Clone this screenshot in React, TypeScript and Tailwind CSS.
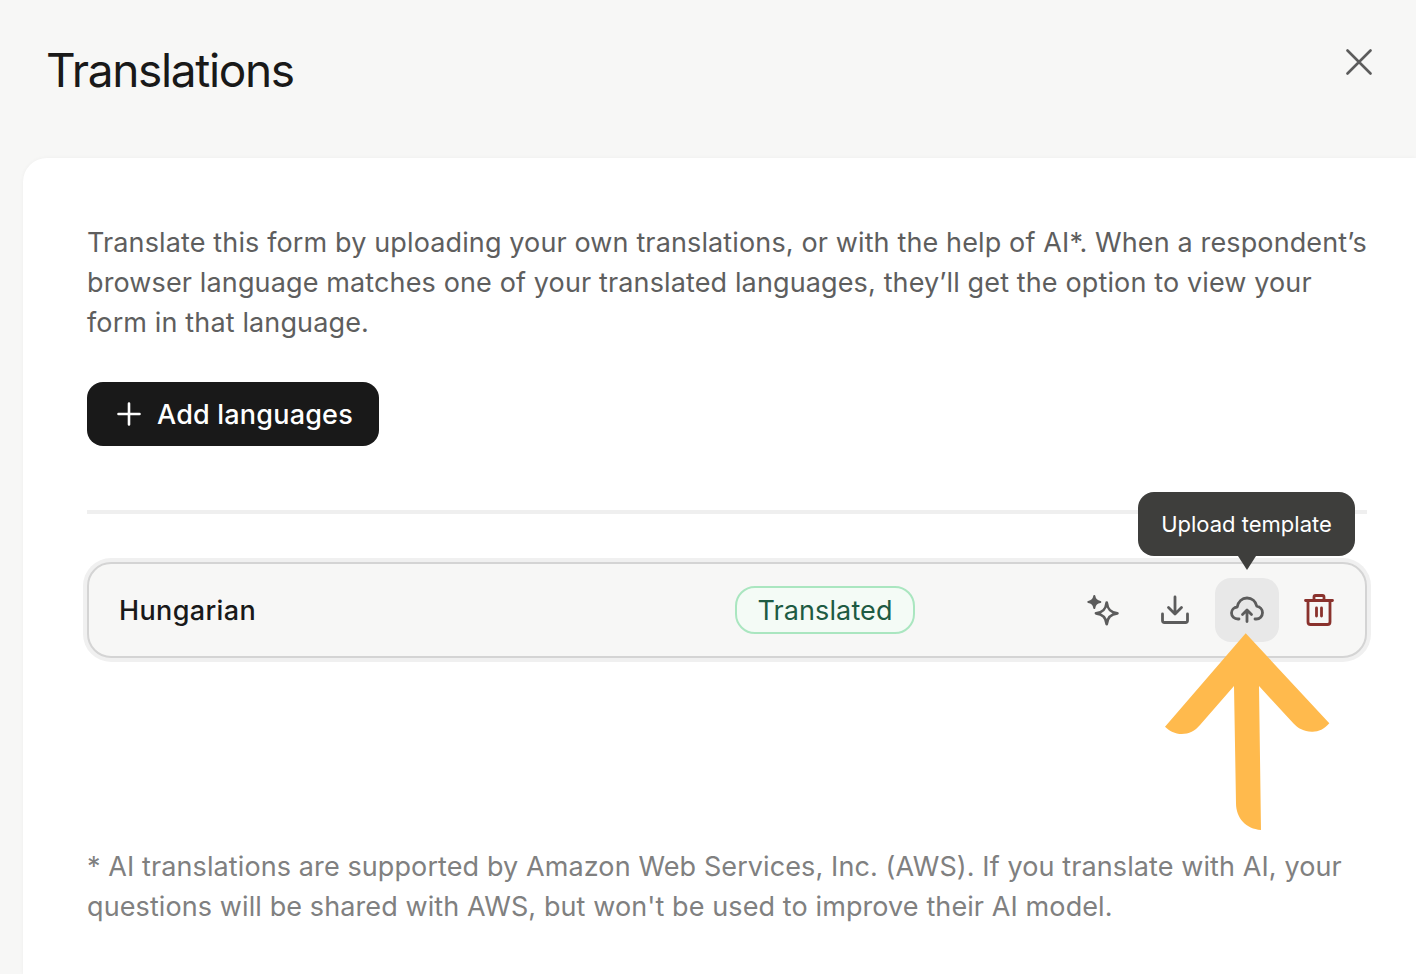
export default function App() {
  return (
    <div className="relative h-[974px] w-[1416px] overflow-hidden bg-[#f7f7f6] font-['Inter',sans-serif] [font-variation-settings:'opsz'_14]">
      <header className="flex h-[158px] items-start justify-between pl-[46px] pr-[44px]">
        <h1 className="mt-[40px] text-[46px] leading-[60px] font-normal tracking-[-1.35px] text-[#191919] [font-variation-settings:normal]">Translations</h1>
        <button className="mt-[49px]" aria-label="Close">
          <svg width="26" height="26" viewBox="0 0 26 26" fill="none" stroke="#5c5c5c" strokeWidth="2.6" strokeLinecap="round" className="block">
            <path d="M1.5 1.5L24.5 24.5M24.5 1.5L1.5 24.5" />
          </svg>
        </button>
      </header>
      <main className="ml-[23px] h-[816px] rounded-tl-[24px] bg-white pl-[64px] pr-[49px] pt-[65px] shadow-[0_0_4px_rgba(0,0,0,0.04)]">
        <p className="text-[27px] leading-[40px] tracking-[0.13px] text-[#5e5e5e]">
          Translate this form by uploading your own translations, or with the help of AI*. When a respondent’s browser language matches one of your translated languages, they’ll get the option to view your form in that language.
        </p>
        <button className="mt-[39px] flex h-[64px] w-[292px] items-center rounded-[16px] bg-[#191919] pl-[30px] text-[27px] font-[450] tracking-[0.2px] text-white">
          <svg width="24" height="24" viewBox="0 0 24 24" fill="none" stroke="white" strokeWidth="2.6" strokeLinecap="round" className="block">
            <path d="M12 1.5V22.5M1.5 12H22.5" />
          </svg>
          <span className="ml-[16px] pt-[2px]">Add languages</span>
        </button>
        <div className="mt-[64px] h-[4px] bg-[#efefef]" />
        <div className="relative mt-[48px] flex h-[96px] items-center rounded-[24px] border-2 border-[#d4d4d4] bg-[#f7f7f6] pl-[30px] pr-[14px] shadow-[0_0_0_4px_#f0f0f0]">
          <span className="w-[616px] pt-[2px] text-[27px] font-[450] tracking-[0.36px] text-[#191919]">Hungarian</span>
          <span className="flex h-[48px] w-[180px] items-center justify-center rounded-[20px] border-2 border-[#aae6c0] bg-[#f4fbf6] pt-[2px] text-[27px] tracking-[0.12px] text-[#1e5b43]">Translated</span>
          <div className="ml-auto flex items-center gap-[8px]">
            <button className="flex h-[64px] w-[64px] items-center justify-center" aria-label="Translate with AI">
              <svg width="36" height="36" viewBox="0 0 36 36" fill="none" className="block">
                <path d="M21.7 10.6C22.6 17.5 25.5 20.4 32.4 21.3C25.5 22.2 22.6 25.1 21.7 32C20.8 25.1 17.9 22.2 11 21.3C17.9 20.4 20.8 17.5 21.7 10.6Z" stroke="#5c5c5c" strokeWidth="2.8" strokeLinejoin="round" />
                <path d="M9.3 4C9.8 7.5 11.5 9.5 15.3 10C11.5 10.5 9.8 12.5 9.3 16C8.8 12.5 7.1 10.5 3.3 10C7.1 9.5 8.8 7.5 9.3 4Z" fill="#5c5c5c" stroke="#5c5c5c" strokeWidth="2" strokeLinejoin="round" />
              </svg>
            </button>
            <button className="flex h-[64px] w-[64px] items-center justify-center" aria-label="Download template">
              <svg width="32" height="32" viewBox="0 0 32 32" fill="none" stroke="#5c5c5c" strokeWidth="2.8" strokeLinecap="round" strokeLinejoin="round" className="block">
                <path d="M16 3V20M9.5 13.5L16 20L22.5 13.5" />
                <path d="M3.5 20V26.5C3.5 27.6 4.4 28.5 5.5 28.5H26.5C27.6 28.5 28.5 27.6 28.5 26.5V20" />
              </svg>
            </button>
            <button className="flex h-[64px] w-[64px] items-center justify-center rounded-[16px] bg-[#e8e8e8]" aria-label="Upload template">
              <svg width="34" height="28" viewBox="0 0 34 28" fill="none" stroke="#5c5c5c" strokeWidth="2.8" strokeLinecap="round" strokeLinejoin="round" className="block">
                <path d="M9 23H8C4.2 23 1.5 20.3 1.5 17C1.5 13.8 4 11.2 7.2 11C8.2 5.6 12 2 17 2C22 2 25.8 5.6 26.8 10.2C30 10.8 32.5 13.6 32.5 16.8C32.5 20.2 29.8 23 26.3 23H25" />
                <path d="M17 25.5V14.5M12.5 18.5L17 14L21.5 18.5" />
              </svg>
            </button>
            <button className="flex h-[64px] w-[64px] items-center justify-center" aria-label="Delete">
              <svg width="30" height="32" viewBox="0 0 30 32" fill="none" stroke="#8a322d" strokeWidth="2.8" strokeLinecap="round" strokeLinejoin="round" className="block">
                <path d="M1.5 6.5H28.5M10 6.5V3C10 2.2 10.7 1.5 11.5 1.5H18.5C19.3 1.5 20 2.2 20 3V6.5" />
                <path d="M4 6.5V28C4 29.4 5.1 30.5 6.5 30.5H23.5C24.9 30.5 26 29.4 26 28V6.5" />
                <path d="M12.5 14V22M17.5 14V22" />
              </svg>
            </button>
          </div>

          <div className="absolute bottom-[100px] right-[10px] flex h-[64px] w-[217px] items-center justify-center rounded-[16px] bg-[#3e3e3c] text-[22px] text-white">
            Upload template
            <div className="absolute left-[100px] top-[64px] h-0 w-0 border-x-[9px] border-t-[14px] border-x-transparent border-t-[#3e3e3c]" />
          </div>
        </div>
        <p className="mt-[189px] text-[27px] leading-[40px] tracking-[0.1px] text-[#808080]">
          * AI translations are supported by Amazon Web Services, Inc. (AWS). If you translate with AI, your questions will be shared with AWS, but won't be used to improve their AI model.
        </p>
      </main>
      <svg width="1416" height="974" viewBox="0 0 1416 974" className="pointer-events-none absolute left-0 top-0">
        <path
          d="M1245.7 633.3L1329.3 723.3C1324 729.5 1318 732 1311.7 731.7C1304 731.5 1298 728.5 1293.3 723.3L1259 686L1261 830C1246 829 1236 818 1236 803.3L1234 686L1200 725C1195 731 1189 734 1181.7 734C1175 734 1169.5 731 1165 726.7Z"
          fill="#ffba4d"
        />
      </svg>
    </div>
  );
}
